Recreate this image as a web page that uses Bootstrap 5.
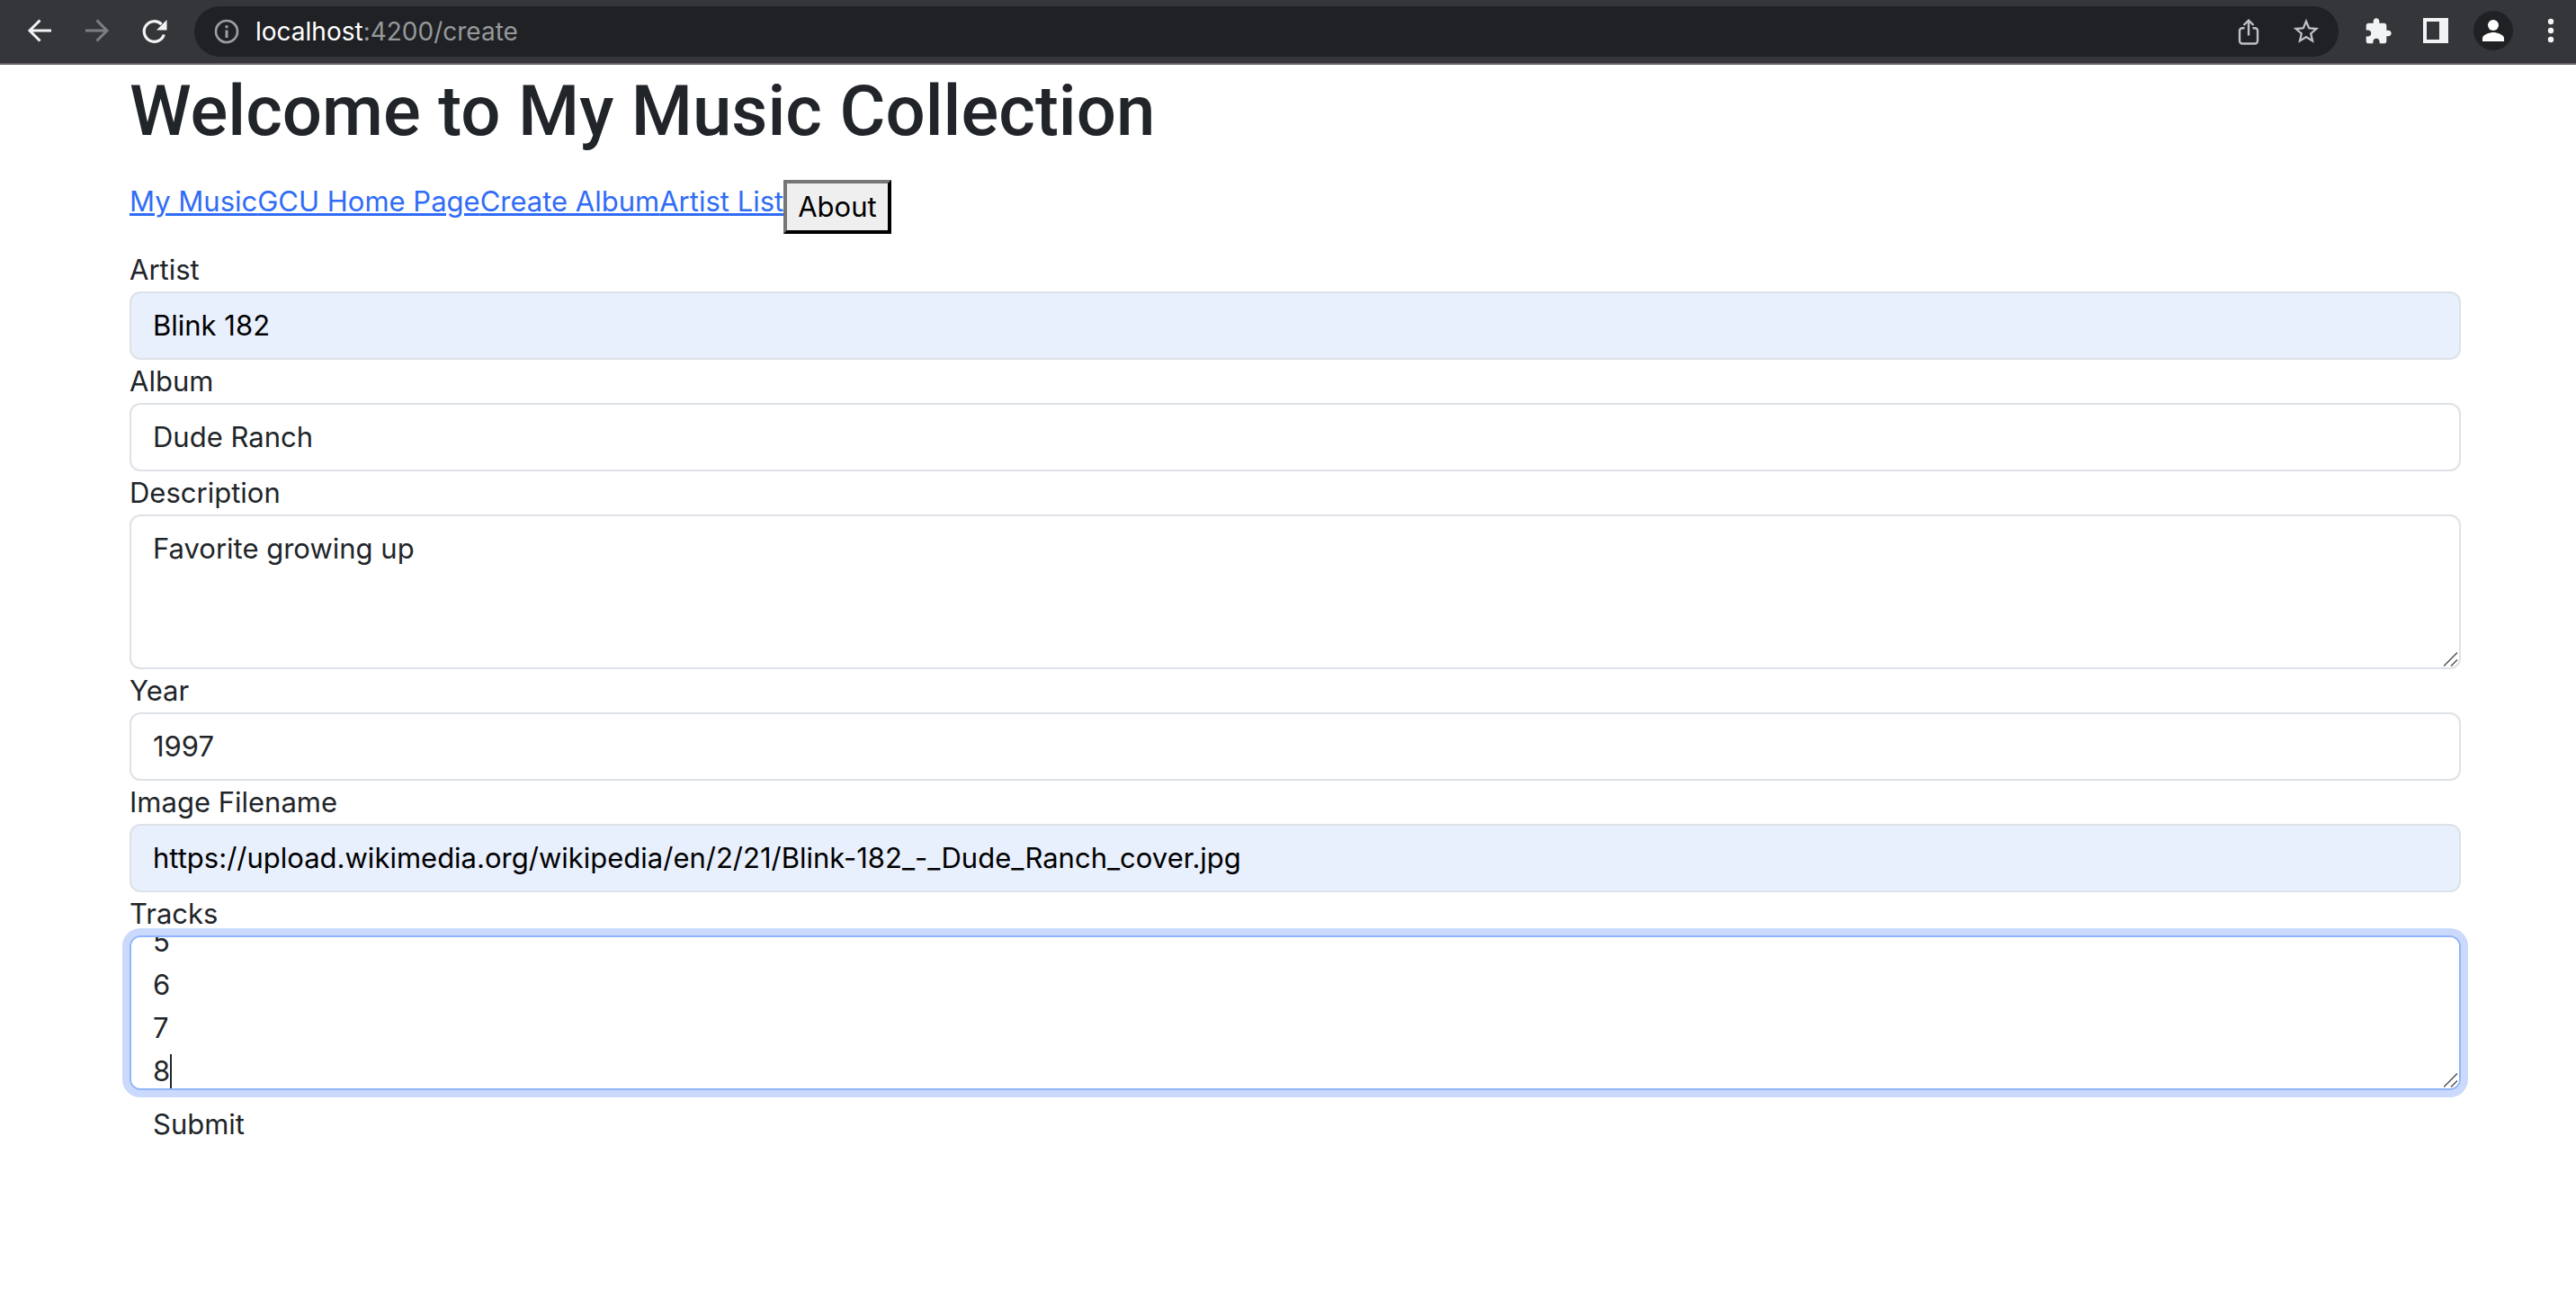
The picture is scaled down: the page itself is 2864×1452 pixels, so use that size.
<!DOCTYPE html>
<html lang="en">
<head>
<meta charset="utf-8">
<meta name="viewport" content="width=device-width, initial-scale=1">
<title>My Music Collection</title>
<link rel="stylesheet" href="https://cdn.jsdelivr.net/npm/bootstrap@5.3.0/dist/css/bootstrap.min.css">
<style>
  html { font-size: 32px; }
  body { font-family: Inter, "Liberation Sans", sans-serif; font-size: 31px; line-height: 48px; color: #212529; }
  .browser-bar { height: 72px; background: #35363a; border-bottom: 2px solid #655f67; padding: 0 12px 0 28px; }
  .bar-group { gap: 32px; }
  .bar-btn { width: 32px; height: 32px; padding: 0; border: 0; background: none; display: flex; align-items: center; justify-content: center; color: #f1f3f4; }
  .bar-btn:disabled { color: #7d7e81; }
  .bar-btn svg { display: block; flex: none; overflow: visible; }
  .omnibox { height: 56px; margin: 0 28px; padding: 0 20px; border-radius: 28px; background: #202124; }
  .omnibox .bar-btn { color: #bdc1c6; }
  .omnibox .site-info { color: #9aa0a6; }
  .url-text { font-size: 28px; line-height: 32px; margin-left: 16px; color: #96989b; white-space: nowrap; }
  .url-host { color: #fff; }
  .page-wrap { padding: 0 128px 0 144px; }
  .page-title { font-family: Roboto, Inter, sans-serif; font-size: 78px; line-height: 96px; padding-top: 4px; margin-bottom: 28px; }
  .page-nav a { color: #306cf6; }
  .about-btn { border: 4px outset #000; border-color: #767676 #212121 #212121 #767676; background: #efefef; color: #000; padding: 2px 12px; }
  .album-form label { display: block; }
  .album-form .form-control { font-size: 31px; line-height: 48px; padding: 12px 24px; border: 2px solid #dee2e6; border-radius: 12px; color: #212529; }
  .album-form .autofilled { background: #e8effd; color: #000; }
  .album-form textarea { display: block; height: 172px; resize: none; scrollbar-width: none; }
  .album-form textarea::-webkit-scrollbar { display: none; }
  .album-form .is-active, .album-form .is-active:focus { border-color: #8eb4fb; box-shadow: 0 0 0 8px #cbd9fc; caret-color: transparent; }
  .grip { position: absolute; right: 3px; bottom: 3px; width: 16px; height: 16px; pointer-events: none; }
  .text-caret { position: absolute; left: 45px; bottom: 2px; width: 2px; height: 38px; background: #212529; pointer-events: none; }
  .album-form .btn { font-size: 31px; line-height: 48px; padding: 12px 24px; border: 2px solid transparent; color: #212529; }
</style>
<script src="https://cdn.jsdelivr.net/npm/bootstrap@5.3.0/dist/js/bootstrap.bundle.min.js"></script>
</head>
<body>
<header class="browser-bar d-flex align-items-center">
  <div class="bar-group d-flex">
    <button class="bar-btn" type="button" aria-label="Back"><svg width="32" height="32" viewBox="0 0 32 32" fill="none" stroke="currentColor" stroke-width="3"><path d="M29 15H5M16.500 3.500 5 15l11.500 11.500"/></svg></button>
    <button class="bar-btn" type="button" aria-label="Forward" disabled><svg width="32" height="32" viewBox="0 0 32 32" fill="none" stroke="currentColor" stroke-width="3"><path d="M3 15h24M15.500 3.500 27 15 15.500 26.500"/></svg></button>
    <button class="bar-btn" type="button" aria-label="Reload"><svg width="32" height="32" viewBox="0 0 32 32" fill="none"><path d="M26.300 19.500A11.300 11.300 0 1 1 23.500 8" stroke="currentColor" stroke-width="3.200"/><path d="M29.500 3v11.500H18z" fill="currentColor"/></svg></button>
  </div>
  <div class="omnibox d-flex align-items-center flex-grow-1">
    <button class="bar-btn site-info" type="button" aria-label="Site information"><svg width="32" height="32" viewBox="0 0 32 32"><circle cx="16" cy="16" r="12" fill="none" stroke="currentColor" stroke-width="2.600"/><path d="M14.500 9.300h3v3h-3zM14.500 14.500h3v8.500h-3z" fill="currentColor"/></svg></button>
    <div class="url-text flex-grow-1" role="textbox" aria-label="Address"><span class="url-host">localhost</span>:4200/create</div>
    <div class="bar-group d-flex">
      <button class="bar-btn" type="button" aria-label="Share"><svg width="32" height="32" viewBox="0 0 32 32" fill="none" stroke="currentColor" stroke-width="2.400"><path d="M11.500 12.200H9a3 3 0 0 0-3 3V26.500a3 3 0 0 0 3 3h14a3 3 0 0 0 3-3V15.200a3 3 0 0 0-3-3h-2.500M16 20.500V4M10.500 9 16 3.700 21.500 9"/></svg></button>
      <button class="bar-btn" type="button" aria-label="Bookmark"><svg width="34" height="34" viewBox="0 0 24 24" fill="currentColor"><path d="m22 9.240-7.190-.620L12 2 9.190 8.630 2 9.240l5.460 4.730L5.820 21 12 17.270 18.180 21l-1.630-7.030L22 9.240zM12 15.400l-3.760 2.270 1-4.280-3.320-2.880 4.380-.380L12 6.100l1.710 4.040 4.380.380-3.320 2.880 1 4.280L12 15.400z"/></svg></button>
    </div>
  </div>
  <div class="bar-group d-flex">
    <button class="bar-btn" type="button" aria-label="Extensions"><svg width="32" height="32" viewBox="0 0 24 24" fill="currentColor"><path d="M20.500 11H19V7c0-1.100-.9-2-2-2h-4V3.500C13 2.120 11.880 1 10.500 1S8 2.120 8 3.500V5H4c-1.100 0-1.990.9-1.990 2v3.800H3.500c1.490 0 2.700 1.210 2.700 2.700s-1.210 2.700-2.700 2.700H2V20c0 1.100.9 2 2 2h3.800v-1.500c0-1.490 1.210-2.700 2.700-2.700s2.700 1.210 2.700 2.700V22H17c1.100 0 2-.9 2-2v-4h1.500c1.380 0 2.500-1.120 2.500-2.500S21.880 11 20.500 11z"/></svg></button>
    <button class="bar-btn" type="button" aria-label="Side panel"><svg width="32" height="32" viewBox="0 0 32 32" fill="currentColor"><path fill-rule="evenodd" d="M2 1h28v28H2zM6 5v20h14V5z"/></svg></button>
    <button class="bar-btn" type="button" aria-label="Profile"><svg width="44" height="44" viewBox="0 0 44 44"><circle cx="22" cy="21" r="22" fill="#202124"/><circle cx="22" cy="15" r="6" fill="#fff"/><path d="M10 33v-3.500c0-4 8-6.500 12-6.500s12 2.500 12 6.500V33z" fill="#fff"/></svg></button>
    <button class="bar-btn" type="button" aria-label="Menu"><svg width="32" height="32" viewBox="0 0 32 32" fill="currentColor"><circle cx="16" cy="5" r="3.200"/><circle cx="16" cy="15" r="3.200"/><circle cx="16" cy="25" r="3.200"/></svg></button>
  </div>
</header>
<main class="page-wrap container-fluid">
  <h1 class="page-title">Welcome to My Music Collection</h1>
  <nav class="page-nav d-flex align-items-start mb-2">
    <a href="#">My Music</a><a href="#">GCU Home Page</a><a href="#">Create Album</a><a href="#">Artist List</a><button class="about-btn" type="button">About</button>
  </nav>
  <form class="album-form">
    <label for="artist">Artist</label>
    <input class="form-control autofilled" id="artist" type="text" value="Blink 182">
    <label for="album">Album</label>
    <input class="form-control" id="album" type="text" value="Dude Ranch">
    <label for="description">Description</label>
    <div class="position-relative">
      <textarea class="form-control" id="description">Favorite growing up</textarea>
      <svg class="grip" viewBox="0 0 16 16" stroke="#555" stroke-width="1.500"><path d="M0 15.500 15 .5M8 15.500 15 8.500"/></svg>
    </div>
    <label for="year">Year</label>
    <input class="form-control" id="year" type="text" value="1997">
    <label for="image">Image Filename</label>
    <input class="form-control autofilled" id="image" type="text" value="https://upload.wikimedia.org/wikipedia/en/2/21/Blink-182_-_Dude_Ranch_cover.jpg">
    <label for="tracks">Tracks</label>
    <div class="position-relative">
      <textarea class="form-control is-active" id="tracks">1
2
3
4
5
6
7
8</textarea>
      <span class="text-caret"></span>
      <svg class="grip" viewBox="0 0 16 16" stroke="#555" stroke-width="1.500"><path d="M0 15.500 15 .5M8 15.500 15 8.500"/></svg>
    </div>
    <button class="btn" type="button">Submit</button>
  </form>
</main>
<script>
  document.getElementById('tracks').scrollTop = 223;
</script>
</body>
</html>
